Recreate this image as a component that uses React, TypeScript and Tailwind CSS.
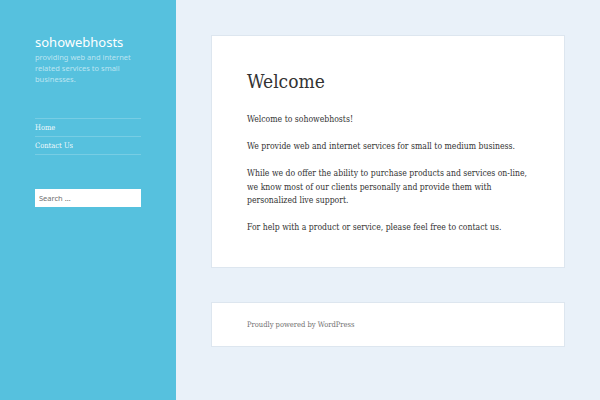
export default function App() {
  const serif = { fontFamily: '"DejaVu Serif Condensed", "DejaVu Serif", serif', fontStretch: 'condensed' }
  return (
    <div className="flex w-[600px] h-[400px] overflow-hidden bg-[#e9f1f9]">
      <aside className="w-[176px] shrink-0 bg-[#56c1de] px-[35px] pt-[34px]">
        <div className="text-[13px] leading-[16px] text-white" style={{ fontFamily: '"Noto Sans", sans-serif' }}>sohowebhosts</div>
        <p className="mt-[2px] text-[7.5px] leading-[11px] text-white/60" style={{ fontFamily: '"Noto Sans", sans-serif' }}>
          providing web and internet<br />related services to small<br />businesses.
        </p>
        <nav className="mt-[33px] border-t border-white/20 text-[7.5px] text-white/95" style={serif}>
          <div className="border-b border-white/20 py-[4px] leading-[9px]">Home</div>
          <div className="border-b border-white/20 py-[4px] leading-[9px]">Contact Us</div>
        </nav>
        <div className="mt-[34px] h-[18px] w-[106px] bg-white px-[4px] text-[7.5px] leading-[18px] text-[#707070]" style={{ fontFamily: '"Noto Sans", sans-serif' }}>
          Search …
        </div>
      </aside>
      <main className="flex-1 pl-[35px] pr-[35px] pt-[35px]">
        <article className="h-[233px] border border-[#dde6ef] bg-white px-[35px] pt-[30px]" style={serif}>
          <h1 className="text-[19px] leading-[30px] text-[#333]">Welcome</h1>
          <div className="mt-[17px] text-[8.6px] leading-[13.5px] text-[#333] space-y-[13.5px]">
            <p>Welcome to sohowebhosts!</p>
            <p>We provide web and internet services for small to medium business.</p>
            <p>While we do offer the ability to purchase products and services on-line,<br />we know most of our clients personally and provide them with<br />personalized live support.</p>
            <p>For help with a product or service, please feel free to contact us.</p>
          </div>
        </article>
        <footer className="mt-[34px] h-[45px] border border-[#dde6ef] bg-white px-[35px] text-[7.5px] leading-[43px] text-[#707070]" style={serif}>
          Proudly powered by WordPress
        </footer>
      </main>
    </div>
  )
}
